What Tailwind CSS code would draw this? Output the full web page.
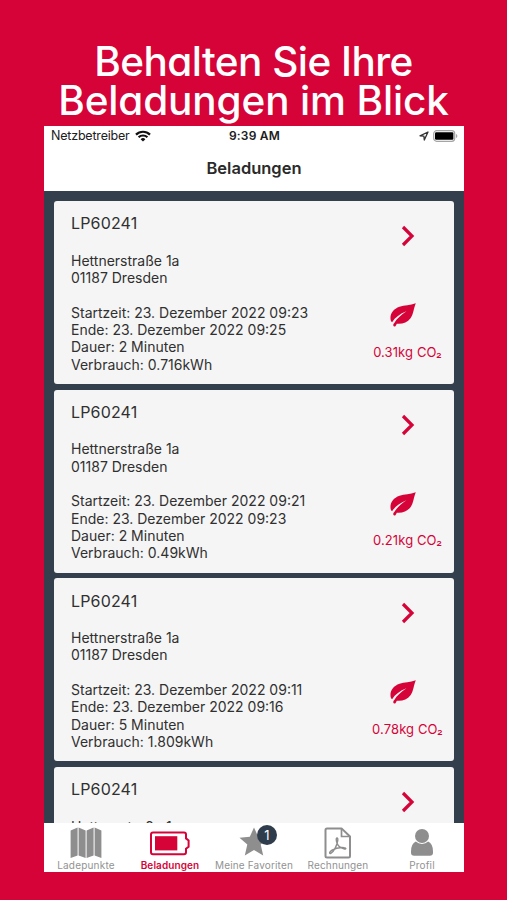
<!DOCTYPE html>
<html lang="de">
<head>
    <meta charset="UTF-8">
    <meta name="viewport" content="width=device-width, initial-scale=1.0">
    <title>Beladungen</title>
    <script src="https://cdn.jsdelivr.net/npm/@tailwindcss/browser@4"></script>
</head>
<body class="bg-[#d50338] h-[900px] overflow-hidden font-['Inter',sans-serif] text-[#303030]">

    <h1 class="pt-[42px] h-[126px] text-white text-center text-[40.5px] leading-[39px] font-medium whitespace-nowrap [font-feature-settings:'cv11']">
        <span class="block tracking-[-0.55px]">Behalten Sie Ihre</span>
        <span class="block tracking-[-0.15px]">Beladungen im Blick</span>
    </h1>

    <div class="ml-[44px] w-[420px] h-[746px] bg-white flex flex-col overflow-hidden">

        <!-- Status bar -->
        <div class="h-5 shrink-0 pl-[7px] pr-[6px] grid grid-cols-3 items-center text-[12.5px] text-[#202020]">
            <div class="flex items-center gap-[5px]">
                <span class="tracking-[-0.2px]">Netzbetreiber</span>
                <svg class="w-[16px] h-[12px]" viewBox="0 0 16 12" fill="none" stroke="#111" stroke-width="2.2">
                    <path d="M1 4.6a10 10 0 0 1 14 0M3.6 7.3a6.3 6.3 0 0 1 8.800 0"/>
                    <path d="M8 11.6 5.6 9.2a3.4 3.4 0 0 1 4.8 0z" fill="#111" stroke="none"/>
                </svg>
            </div>
            <span class="text-center font-semibold text-[12px] tracking-[0.2px]">9:39 AM</span>
            <div class="flex items-center justify-end gap-[4px]">
                <svg class="w-[10px] h-[10px]" viewBox="0 0 10 10" fill="none" stroke="#333" stroke-width="1.3" stroke-linejoin="round">
                    <path d="M9 1 1 4.8l3.9.3.4 3.9z"/>
                </svg>
                <svg class="w-[25px] h-[12px]" viewBox="0 0 25 12">
                    <rect x=".7" y=".7" width="21" height="10.6" rx="3" fill="#fff" stroke="#a5a5a5" stroke-width="1.2"/>
                    <rect x="2" y="2.2" width="18.4" height="7.6" rx="1.2" fill="#000"/>
                    <path d="M23 4v4q1.4-.6 1.4-2T23 4z" fill="#aaa"/>
                </svg>
            </div>
        </div>

        <div class="h-[45px] shrink-0 flex items-center justify-center text-[16.5px] font-semibold text-[#2a2a2a]">Beladungen</div>

        <main id="sessions" class="flex-1 min-h-0 overflow-hidden bg-[#333f4d] pt-[10px] px-[10px] flex flex-col gap-[5.6px]"></main>

        <!-- Tab bar -->
        <nav class="h-[49.5px] shrink-0 grid grid-cols-5 text-center text-[10px] leading-3 text-[#929292] whitespace-nowrap">
            <div class="flex flex-col items-center pt-[4.5px]">
                <svg class="w-[32px] h-[32px]" viewBox="0 0 32 32" fill="#8e8e8e">
                    <path d="M.6 3.4 7.6.6v27.8L.6 31zM8.6.6l7 2.8V31l-7-2.6zM16.6 3.4l7-2.8v27.8l-7 2.6zM24.6.6l6.8 2.8V31l-6.8-2.6z"/>
                </svg>
                <span class="tracking-[0.2px]">Ladepunkte</span>
            </div>
            <div class="flex flex-col items-center pt-[4.5px] text-[#d50338]">
                <svg class="w-[40px] h-[32px]" viewBox="0 0 40 32" fill="none" stroke="currentColor" stroke-width="2">
                    <path d="M3 5.400h31q2 0 2 2v4l2.600 2v6.400l-2.600 2v3.400q0 2-2 2H3q-2 0-2-2V7.400q0-2 2-2z"/>
                    <path d="M5 9.200h22.300v14.200H5z" fill="currentColor" stroke="none"/>
                </svg>
                <span class="font-semibold tracking-[0.1px]">Beladungen</span>
            </div>
            <div class="flex flex-col items-center pt-[4.5px]">
                <div class="relative">
                    <svg class="w-[30px] h-[32px]" viewBox="0 0 30 32" fill="#8e8e8e">
                        <path d="m15 .5 4.200 9.300 10.300.9-7.800 6.800 2.500 11L15 23l-9.200 5.500 2.500-11L.5 10.700l10.300-.9z"/>
                    </svg>
                    <span class="absolute left-[18px] top-[-2px] w-[20px] h-[20px] rounded-full bg-[#2e3c4b] text-white text-[13px] leading-5 text-center">1</span>
                </div>
                <span class="tracking-[0.15px]">Meine Favoriten</span>
            </div>
            <div class="flex flex-col items-center pt-[4.5px]">
                <svg class="w-[28px] h-[32px]" viewBox="0 0 28 32" fill="none" stroke="#8e8e8e" stroke-width="2" stroke-linejoin="round">
                    <path d="M3 1.400h14.500L26 9.500v19.600q0 1.500-1.500 1.500H3q-1.500 0-1.500-1.500V2.900q0-1.500 1.500-1.500z"/>
                    <path d="M17.500 1.400v8.100H26" stroke-width="1.700"/>
                    <path d="M13 11c-1.200 0-.8 3.400.3 5.800 1.200 2.800 4.200 4.600 7.300 5.200 1.800.2 1.600-1.300-.4-1.400-4.200-.4-9.200.7-12.200 2.500-3 1.900-2.900 4-1.200 3.200 3.200-1.700 6.800-9.200 7-13.200.1-1.400-.2-2.100-.8-2.100z" stroke-width="1.400"/>
                </svg>
                <span class="tracking-[0.15px]">Rechnungen</span>
            </div>
            <div class="flex flex-col items-center pt-[4.5px]">
                <svg class="w-[24px] h-[32px]" viewBox="0 0 24 32" fill="#8e8e8e">
                    <circle cx="12" cy="9" r="7"/>
                    <path d="M5.800 14.600q-4.800 2.300-4.800 10v1.200q0 3 3.200 3h15.600q3.200 0 3.200-3v-1.200q0-7.700-4.800-10Q15.600 17 12 17t-6.200-2.400z"/>
                </svg>
                <span class="tracking-[0.15px]">Profil</span>
            </div>
        </nav>
    </div>

    <script>
        const sessions = [
            { start: '23. Dezember 2022 09:23', end: '23. Dezember 2022 09:25', duration: '2 Minuten', usage: '0.716kWh', co2: '0.31kg' },
            { start: '23. Dezember 2022 09:21', end: '23. Dezember 2022 09:23', duration: '2 Minuten', usage: '0.49kWh', co2: '0.21kg' },
            { start: '23. Dezember 2022 09:11', end: '23. Dezember 2022 09:16', duration: '5 Minuten', usage: '1.809kWh', co2: '0.78kg' }
        ];

        const details = s => `
            <p class="mt-[17.3px]">Startzeit: ${s.start}<br>Ende: ${s.end}<br>Dauer: ${s.duration}<br>Verbrauch: ${s.usage}</p>`;

        const leaf = s => `
            <svg class="mt-[56px] -ml-[10px] w-[26px] h-[24px]" viewBox="0 0 26 24" fill="currentColor">
                <path d="M25.800.3C20 2.600 14.500 2 9.500 3.800 3 6.200-.5 11 .7 17.200c.3.900.8 1.600 1.400 2.100C5 14.500 10 10.800 16.500 8.300 11 12 6.800 15.800 4.300 20c-.9 1-1.100 1.600-1 2.600.2 1 1.600 1.300 2.300.4.500-.8.600-1.500 1.200-2.300 5.500.6 10.600-1.400 13.700-5.500C23.800 10.800 23.500 5.500 25.800.3z"/>
            </svg>
            <span class="mt-[15.500px] text-[13px] leading-[18px] tracking-[0.1px]">${s.co2} CO<span class="relative -top-px">₂</span></span>`;

        const card = s => `
            <article class="h-[183px] shrink-0 rounded-[3px] bg-[#f5f5f5] pl-[17px] flex justify-between">
                <div class="pt-[11.400px] text-[14px] leading-[17.3px] whitespace-nowrap">
                    <h2 class="text-[16px] leading-[22px] tracking-[0.15px]">LP60241</h2>
                    <p class="mt-[17.5px]">Hettnerstraße 1a${s ? '<br>01187 Dresden' : ''}</p>
                    ${s ? details(s) : ''}
                </div>
                <div class="w-[93px] flex flex-col items-center text-[#d50338] whitespace-nowrap">
                    <svg class="mt-[24px] w-[16px] h-[22px]" viewBox="0 0 16 22" fill="none" stroke="currentColor" stroke-width="3.2">
                        <path d="m3 2 9 9-9 9"/>
                    </svg>
                    ${s ? leaf(s) : ''}
                </div>
            </article>`;

        document.getElementById('sessions').innerHTML = [...sessions, null].map(card).join('');
    </script>

</body>
</html>
